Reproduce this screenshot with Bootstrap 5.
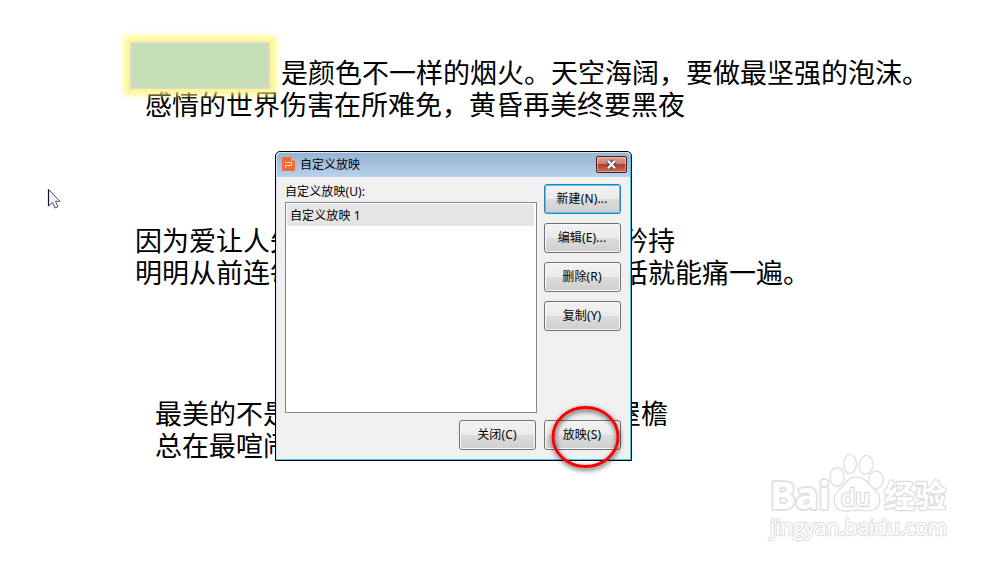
<!DOCTYPE html>
<html lang="zh-CN">
<head>
    <meta charset="UTF-8">
    <meta name="viewport" content="width=device-width, initial-scale=1.0">
    <title>自定义放映</title>
    <link href="https://cdn.jsdelivr.net/npm/bootstrap@5.3.0/dist/css/bootstrap.min.css" rel="stylesheet">
    <style>
    body {
        background-color: #fff;
        color: #000;
        font-family: "Noto Sans CJK SC", sans-serif;
    }
    .slide {
        width: 1003px;
        height: 562px;
    }
    /* slide objects */
    .verse {
        font-size: 27px;
        line-height: 32px;
        font-weight: 400;
        white-space: nowrap;
    }
    .verse-1 { left: 145px; top: 56px; }
    .verse-2 { left: 135px; top: 224px; }
    .verse-3 { left: 155px; top: 397px; }
    .blank { display: inline-block; }
    .blank-lead { width: 136px; }
    .blank-mid { width: 324px; }
    .glow-box {
        left: 130px;
        top: 42px;
        width: 140px;
        height: 47px;
        background-color: #c5e0b4;
        border: 2px solid #d9d9d9;
        box-shadow: 0 0 6px 6px rgba(255, 243, 120, .85);
    }
    .pointer { left: 47px; top: 188px; }
    .watermark { left: 755px; top: 445px; }

    /* dialog window */
    .dialog-win {
        left: 275px;
        top: 151px;
        width: 357px;
        height: 310px;
        background-color: #f0f0f0;
        border: 1px solid #000;
        border-radius: 5px 5px 0 0;
        box-shadow: inset -1px -1px 0 #3cc8ee, inset 1px 1px 0 #d5e4f2;
        font-family: "Noto Sans", "Noto Sans CJK SC", sans-serif;
        font-size: 12px;
        line-height: 18px;
    }
    .title-strip {
        height: 24px;
        margin: 1px 1px 0;
        padding: 0 3px 2px 5px;
        border-radius: 4px 4px 0 0;
        background: linear-gradient(#98b3d0, #b9d1ea);
    }
    .title-text {
        margin-left: 5px;
        padding-top: 2px;
    }
    .close-x {
        width: 31px;
        height: 17px;
        border: 1px solid #4b1a1c;
        border-radius: 2px;
        box-shadow: inset 0 0 0 1px rgba(255, 205, 195, .55);
        background: linear-gradient(#dda096 0, #cc8075 45%, #b4402e 50%, #c9695a 100%);
    }
    .dialog-main { padding: 6px 10px 0 9px; }
    .list-label { letter-spacing: .1px; }
    .show-list {
        width: 252px;
        height: 211px;
        margin-top: 1px;
        background-color: #fff;
        border: 1px solid #828790;
        padding: 1px 2px 0 1px;
    }
    .show-item {
        height: 22px;
        line-height: 23px;
        padding-left: 3px;
        letter-spacing: .1px;
        background-color: #e5e5e5;
    }
    .win-btn {
        width: 77px;
        height: 30px;
        padding: 0 1px 1px 0;
        color: #000;
        font-size: 12px;
        line-height: 27px;
        letter-spacing: .15px;
        border: 1px solid #707070;
        border-radius: 3px;
        box-shadow: inset 0 0 0 1px #fafafa;
        background: linear-gradient(#f2f2f2 0, #ebebeb 49%, #dcdcdc 50%, #cfcfcf 100%);
    }
    .win-btn.is-default {
        border-color: #2d7fb8;
        box-shadow: inset 0 0 0 1px #4fc8f4;
    }
    .btn-stack { gap: 9px; padding-top: 1px; }
    .bottom-row { gap: 8px; padding: 7px 10px 0 0; }
    .red-ring {
        left: 545px;
        top: 398px;
    }
    </style>
</head>
<body>
    <main class="slide position-relative overflow-hidden">
        <div class="verse verse-1 position-absolute">
            <div><span class="blank blank-lead"></span>是颜色不一样的烟火。天空海阔，要做最坚强的泡沫。</div>
            <div>感情的世界伤害在所难免，黄昏再美终要黑夜</div>
        </div>
        <div class="verse verse-2 position-absolute">
            <div>因为爱让人失<span class="blank blank-mid"></span>矜持</div>
            <div>明明从前连每<span class="blank blank-mid"></span>话就能痛一遍。</div>
        </div>
        <div class="verse verse-3 position-absolute">
            <div>最美的不是<span class="blank blank-mid"></span>屋檐</div>
            <div>总在最喧闹</div>
        </div>
        <div class="glow-box position-absolute"></div>

        <svg class="pointer position-absolute" width="16" height="22" viewBox="0 0 16 22">
            <path d="M1.5 1.5V18L5.4 14.4L8 20L11 18.7L8.5 13.3H13Z" fill="#f4f4f8" stroke="#4c5064" stroke-width="1"/>
            <path d="M1.5 1.5V18" stroke="#10142c" stroke-width="1.2"/>
        </svg>

        <!-- watermark -->
        <svg class="watermark position-absolute" width="210" height="105" viewBox="0 0 210 105" fill="#fff" stroke="#e2e2e2" stroke-width="1.5" stroke-linejoin="round">
            <text x="15" y="64" font-family="Open Sans, sans-serif" font-weight="bold" font-size="38" stroke-width="4" paint-order="stroke" textLength="60" lengthAdjust="spacingAndGlyphs">Bai</text>
            <ellipse cx="82" cy="32" rx="7" ry="9.5"/>
            <ellipse cx="95" cy="19" rx="6.5" ry="9.5"/>
            <ellipse cx="111" cy="20" rx="7" ry="9.5" transform="rotate(8 111 20)"/>
            <ellipse cx="121" cy="35" rx="7.3" ry="9" transform="rotate(10 121 35)"/>
            <path d="M101 32C92 32 90 41 83 46C77 51 78 65 88 66C94 67 97 65 102 65C108 65 112 67 118 65C127 62 126 51 121 46C114 40 111 32 101 32Z"/>
            <text x="86" y="61" font-family="Open Sans, sans-serif" font-weight="600" font-size="24" stroke="#d8d8d8" stroke-width="2.4" paint-order="stroke" textLength="29" lengthAdjust="spacingAndGlyphs">du</text>
            <text x="15" y="90" font-family="Open Sans, sans-serif" font-size="21" stroke-width="2.6" paint-order="stroke" textLength="177" lengthAdjust="spacingAndGlyphs">jingyan.baidu.com</text>
            <text x="129" y="62" font-family="Noto Sans CJK SC, sans-serif" font-size="31" font-weight="bold" stroke="#dcdcdc" stroke-width="2.4" paint-order="stroke">经验</text>
        </svg>

        <div class="dialog-win position-absolute">
            <div class="title-strip d-flex align-items-center">
                <svg width="13" height="14" viewBox="0 0 13 14">
                    <path d="M1.5 0H9.5L13 3.5V12.5Q13 14 11.5 14H1.5Q0 14 0 12.5V1.5Q0 0 1.5 0Z" fill="#f26b38"/>
                    <path d="M9.5 0L13 3.5H9.5Z" fill="#f9b294"/>
                    <path d="M3 5.5H9.5V8.5H3.5V11" fill="none" stroke="#ffd9b8" stroke-width="1.1"/>
                </svg>
                <span class="title-text me-auto">自定义放映</span>
                <div class="close-x d-flex align-items-center justify-content-center">
                    <svg width="13" height="11" viewBox="0 0 13 11">
                        <path d="M3 1.8L10 9.2M10 1.8L3 9.2" stroke="#4d4350" stroke-width="4.4"/>
                        <path d="M3 1.8L10 9.2M10 1.8L3 9.2" stroke="#f4f4f4" stroke-width="2.4"/>
                    </svg>
                </div>
            </div>
            <div class="dialog-main d-flex justify-content-between">
                <div>
                    <div class="list-label">自定义放映(U):</div>
                    <div class="show-list">
                        <div class="show-item">自定义放映 1</div>
                    </div>
                </div>
                <div class="btn-stack d-flex flex-column">
                    <button class="btn win-btn is-default">新建(N)...</button>
                    <button class="btn win-btn">编辑(E)...</button>
                    <button class="btn win-btn">删除(R)</button>
                    <button class="btn win-btn">复制(Y)</button>
                </div>
            </div>
            <div class="bottom-row d-flex justify-content-end">
                <button class="btn win-btn">关闭(C)</button>
                <button class="btn win-btn">放映(S)</button>
            </div>
        </div>

        <svg class="red-ring position-absolute" width="84" height="82" viewBox="0 0 84 82">
            <defs>
                <filter id="ringShadow" x="-20%" y="-20%" width="140%" height="140%">
                    <feDropShadow dx="0.5" dy="2" stdDeviation="2.5" flood-color="#000" flood-opacity=".75"/>
                </filter>
            </defs>
            <ellipse cx="40.5" cy="39" rx="32.5" ry="29.5" fill="none" stroke="#fa0000" stroke-width="2.8" filter="url(#ringShadow)"/>
        </svg>
    </main>
    <script src="https://cdn.jsdelivr.net/npm/bootstrap@5.3.0/dist/js/bootstrap.bundle.min.js"></script>
</body>
</html>
